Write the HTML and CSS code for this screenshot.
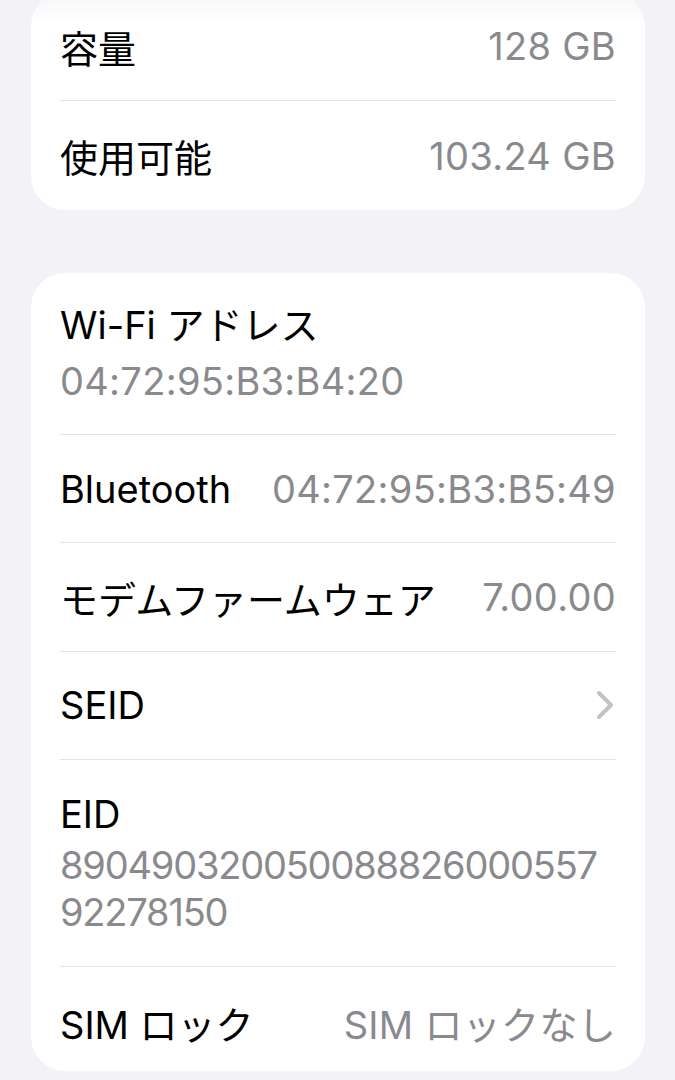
FILE: index.html
```html
<!DOCTYPE html>
<html lang="ja">
<head>
<meta charset="utf-8">
<title>情報</title>
<link rel="stylesheet" href="styles.css">
</head>
<body>
<div class="page">
  <div class="topfade"></div>
  <section class="card card-first">
    <div class="row first">
      <span class="label">容量</span>
      <span class="value">128 GB</span>
    </div>
    <div class="row">
      <span class="label">使用可能</span>
      <span class="value">103.24 GB</span>
    </div>
  </section>

  <section class="card">
    <div class="row stacked wifi">
      <span class="label">Wi-Fi アドレス</span>
      <span class="value">04:72:95:B3:B4:20</span>
    </div>
    <div class="row">
      <span class="label">Bluetooth</span>
      <span class="value">04:72:95:B3:B5:49</span>
    </div>
    <div class="row">
      <span class="label">モデムファームウェア</span>
      <span class="value">7.00.00</span>
    </div>
    <div class="row">
      <span class="label">SEID</span>
      <svg class="chevron" viewBox="0 0 20 30" width="20" height="30" aria-hidden="true">
        <path d="M4 3 L16 15 L4 27" fill="none" stroke="#c2c2c6" stroke-width="4" stroke-linecap="round" stroke-linejoin="round"/>
      </svg>
    </div>
    <div class="row stacked eid">
      <span class="label">EID</span>
      <span class="value">890490320050088826000557<br>92278150</span>
    </div>
    <div class="row last">
      <span class="label">SIM ロック</span>
      <span class="value">SIM ロックなし</span>
    </div>
  </section>
</div>
</body>
</html>
```

FILE: styles.css
```css
* { box-sizing: border-box; }

html, body {
  margin: 0;
  padding: 0;
  background: #f2f2f7;
  height: 1080px;
  overflow: hidden;
}

body {
  font-family: Inter, "Noto Sans CJK JP", sans-serif;
  font-size: 38px;
  color: #000;
  -webkit-font-smoothing: antialiased;
}

.page {
  position: relative;
  display: flex;
  flex-direction: column;
  gap: 63px;
  padding: 0 30px 0 31px;
  margin-top: -8px;
}

.topfade {
  position: absolute;
  left: 0;
  right: 0;
  top: 8px;
  height: 22px;
  background: linear-gradient(to bottom, rgba(242, 242, 247, 0.55), rgba(242, 242, 247, 0));
  z-index: 2;
  pointer-events: none;
}

.card {
  background: #fff;
  border-radius: 34px;
  display: flex;
  flex-direction: column;
}

.row {
  height: 108px;
  margin: 0 29px;
  display: flex;
  align-items: center;
  justify-content: space-between;
  gap: 20px;
}

.row + .row {
  border-top: 1px solid #e2e2e5;
  height: 108.4px;
}

.card-first .row + .row {
  height: 110px;
}

.label {
  color: #000;
  white-space: nowrap;
}

.value {
  color: #8a8a8e;
  white-space: nowrap;
  letter-spacing: 0.3px;
}

.stacked {
  flex-direction: column;
  align-items: flex-start;
  justify-content: flex-start;
  gap: 0;
}

.wifi {
  height: 161px;
  padding-top: 24px;
}

.wifi .label,
.wifi .value {
  line-height: 56px;
}

.row.eid {
  height: 207px;
  padding-top: 26px;
}

.eid .label {
  line-height: 56px;
}

.eid .value {
  line-height: 47px;
  letter-spacing: -1.2px;
}

.row.last {
  height: 105px;
  padding-top: 6px;
}

.chevron {
  display: block;
  margin-right: 1px;
}
```
